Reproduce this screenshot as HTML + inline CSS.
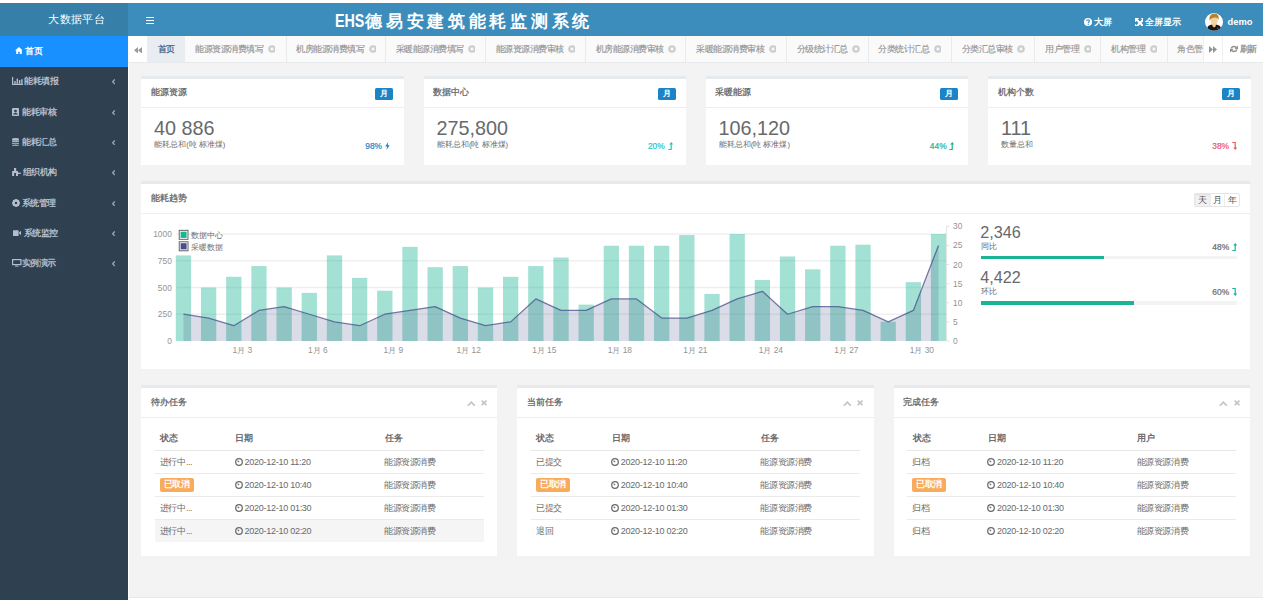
<!DOCTYPE html>
<html><head><meta charset="utf-8"><title>EHS德易安建筑能耗监测系统</title>
<style>
*{box-sizing:border-box;margin:0;padding:0}
html,body{width:1263px;height:600px;overflow:hidden;background:#fff;font-family:"Liberation Sans",sans-serif;color:#676a6c}
.a{position:absolute}
.t{white-space:nowrap;line-height:normal}
#title{left:334.5px;top:9.5px;color:#fff;font-weight:bold;font-size:17px;letter-spacing:3.72px;white-space:nowrap}
#title b{font-size:19.2px;letter-spacing:0;display:inline-block;transform:scaleX(0.745);transform-origin:0 50%;margin-right:-8.9px;vertical-align:-0.5px}
.badge{width:18.3px;height:11.9px;background:#1c84c6;color:#fff;font-size:8px;font-weight:bold;text-align:center;line-height:12px;border-radius:1.5px}
.pct{font-size:8.4px;-webkit-text-stroke:0.2px currentColor;white-space:nowrap;display:flex;align-items:center;justify-content:flex-end}
.ax{font-size:8.4px;fill:#939393;font-family:"Liberation Sans",sans-serif}
.lg{font-size:8.4px;fill:#6e6e6e;font-family:"Liberation Sans",sans-serif}
.btns{height:14.2px;display:flex;border:1px solid #e6e6e6;border-radius:2px;font-size:8.5px;color:#555;background:#fff}
.btns span{width:14.6px;text-align:center;line-height:12px;border-left:1px solid #ececec}
.btns span.on{border-left:0;background:#f2f2f2;box-shadow:inset 0 1px 2px rgba(0,0,0,.08)}
.lbl{width:34px;height:13.2px;background:#f8ac59;color:#fff;font-weight:bold;font-size:8.5px;line-height:13.4px;text-align:center;border-radius:2px;letter-spacing:-0.5px}
</style></head><body>
<div class="a" style="left:0px;top:3px;width:128.00px;height:33.00px;background:#367fa9"></div>
<div class="a" style="left:128px;top:3px;width:1135.00px;height:33.00px;background:#3c8dbc"></div>
<div class="a t" style="left:48.3px;top:11.8px;font-size:11.3px;color:#fff;letter-spacing:0.35px">大数据平台</div>
<div class="a" style="left:145.7px;top:16.9px;width:8.50px;height:1.50px;background:#fff"></div>
<div class="a" style="left:145.7px;top:19.9px;width:8.50px;height:1.50px;background:#fff"></div>
<div class="a" style="left:145.7px;top:22.9px;width:8.50px;height:1.50px;background:#fff"></div>
<div class="a" id="title"><b>EHS</b>德易安建筑能耗监测系统</div>
<svg class="a" style="left:1083.8px;top:18.2px;" width="7.8" height="7.8" viewBox="0 8 8"><circle cx="4" cy="4" r="4" fill="#fff"/><path d="M2.7 3.1C2.7 1.3 5.4 1.3 5.4 3C5.4 4 4.3 4.1 4.3 5" stroke="#3c8dbc" stroke-width="1.2" fill="none"/><rect x="3.7" y="5.7" width="1.2" height="1.1" fill="#3c8dbc"/></svg>
<div class="a t" style="left:1094.2px;top:16.3px;font-size:9px;font-weight:bold;color:#fff">大屏</div>
<svg class="a" style="left:1134.9px;top:18px;" width="8.4" height="7.8" viewBox="0 10 10"><path d="M0 0H4.2L0 4.2Z M10 0V4.2L5.8 0Z M0 10V5.8L4.2 10Z M10 10H5.8L10 5.8Z" fill="#fff"/><path d="M1 1L9 9M9 1L1 9" stroke="#fff" stroke-width="2"/></svg>
<div class="a t" style="left:1145.3px;top:16.3px;font-size:9px;font-weight:bold;color:#fff">全屏显示</div>
<svg class="a" style="left:1204.8px;top:12.8px;" width="18" height="18" viewBox="0 18 18"><circle cx="9" cy="9" r="9" fill="#fff"/><clipPath id="cc"><circle cx="9" cy="9" r="8.8"/></clipPath><g clip-path="url(#cc)"><path d="M1.5 18.5C1.5 13 4.5 11.6 9 11.6C13.5 11.6 16.8 13 16.8 18.5Z" fill="#161616"/><path d="M7.4 11H10.8V13.2L9.1 14.6L7.4 13.2Z" fill="#f1c88a"/><ellipse cx="9.1" cy="7.6" rx="3.5" ry="4.4" fill="#f6d39a"/><path d="M4.6 7.6C3.8 2.6 6.5 0.6 9.3 0.6C12.6 0.6 14.4 2.8 13.5 7.2C13 5.3 11.8 4.4 10.2 4.5C8.4 4.6 6.2 5 4.6 7.6Z" fill="#b3842f"/><circle cx="12.8" cy="15.3" r="0.7" fill="#c8502a"/></g></svg>
<div class="a t" style="left:1227.6px;top:17.2px;font-size:9.3px;font-weight:bold;color:#fff">demo</div>
<div class="a" style="left:0px;top:36px;width:128.00px;height:564.00px;background:#2f4050"></div>
<div class="a" style="left:0px;top:36px;width:128.00px;height:30.50px;background:#1890ff"></div>
<svg class="a" style="left:14.8px;top:47.2px;" width="7.6" height="7" viewBox="0 8 7"><path d="M4 0L0 3.6H1.2V7H3.2V4.8H4.8V7H6.8V3.6H8Z" fill="#fff"/></svg>
<div class="a t" style="left:25px;top:45.6px;font-size:8.5px;font-weight:bold;color:#fff;letter-spacing:-0.5px">首页</div>
<svg class="a" style="left:12.1px;top:77.2px;" width="10.6" height="8" viewBox="0 11 8"><path d="M0.6 0V7.4H11" stroke="#b5bdcb" stroke-width="1.2" fill="none"/><rect x="2.3" y="4" width="1.4" height="2.8" fill="#b5bdcb"/><rect x="4.6" y="1.6" width="1.4" height="5.2" fill="#b5bdcb"/><rect x="6.9" y="3" width="1.4" height="3.8" fill="#b5bdcb"/><rect x="9.2" y="2.2" width="1.4" height="4.6" fill="#b5bdcb"/></svg>
<div class="a t" style="left:24.4px;top:76.3px;font-size:8.5px;font-weight:bold;color:#b5bdcb;letter-spacing:-0.5px">能耗填报</div>
<svg class="a" style="left:111.9px;top:79.3px;" width="3.4" height="5.4" viewBox="0 3.4 5.4"><path d="M2.8 0.4L0.7 2.7L2.8 5" stroke="#9aa6b8" stroke-width="1.3" fill="none"/></svg>
<svg class="a" style="left:12.1px;top:107.8px;" width="7.2" height="8" viewBox="0 7 8"><rect x="0" y="0" width="7" height="8" rx="0.8" fill="#b5bdcb"/><circle cx="3.5" cy="3.1" r="1.4" fill="#2f4050"/><path d="M1.2 6.6C1.2 4.6 5.8 4.6 5.8 6.6Z" fill="#2f4050"/></svg>
<div class="a t" style="left:22.2px;top:106.63px;font-size:8.5px;font-weight:bold;color:#b5bdcb;letter-spacing:-0.5px">能耗审核</div>
<svg class="a" style="left:111.9px;top:109.63px;" width="3.4" height="5.4" viewBox="0 3.4 5.4"><path d="M2.8 0.4L0.7 2.7L2.8 5" stroke="#9aa6b8" stroke-width="1.3" fill="none"/></svg>
<svg class="a" style="left:12.1px;top:138px;" width="7.2" height="8.4" viewBox="0 7 8.4"><ellipse cx="3.5" cy="1.4" rx="3.5" ry="1.4" fill="#b5bdcb"/><path d="M0 2.3V3.5C0 4.6 7 4.6 7 3.5V2.3C7 3.4 0 3.4 0 2.3Z" fill="#b5bdcb"/><path d="M0 4.4V5.6C0 6.7 7 6.7 7 5.6V4.4C7 5.5 0 5.5 0 4.4Z" fill="#b5bdcb"/><path d="M0 6.5V7C0 8.6 7 8.6 7 7V6.5C7 7.6 0 7.6 0 6.5Z" fill="#b5bdcb"/></svg>
<div class="a t" style="left:22.2px;top:136.96px;font-size:8.5px;font-weight:bold;color:#b5bdcb;letter-spacing:-0.5px">能耗汇总</div>
<svg class="a" style="left:111.9px;top:139.96px;" width="3.4" height="5.4" viewBox="0 3.4 5.4"><path d="M2.8 0.4L0.7 2.7L2.8 5" stroke="#9aa6b8" stroke-width="1.3" fill="none"/></svg>
<svg class="a" style="left:12px;top:168px;" width="8.8" height="8" viewBox="0 8.8 8"><rect x="2" y="0" width="2.2" height="3.2" fill="#b5bdcb"/><path d="M0.1 3H6V8H4V5H2.2V8H0.1Z" fill="#b5bdcb"/><rect x="6" y="4.6" width="2.7" height="1.4" fill="#b5bdcb"/></svg>
<div class="a t" style="left:22.75px;top:167.29px;font-size:8.5px;font-weight:bold;color:#b5bdcb;letter-spacing:-0.5px">组织机构</div>
<svg class="a" style="left:111.9px;top:170.29000000000002px;" width="3.4" height="5.4" viewBox="0 3.4 5.4"><path d="M2.8 0.4L0.7 2.7L2.8 5" stroke="#9aa6b8" stroke-width="1.3" fill="none"/></svg>
<svg class="a" style="left:12px;top:199.2px;" width="8" height="7.8" viewBox="0 8 8"><circle cx="4" cy="4" r="2.8" fill="none" stroke="#b5bdcb" stroke-width="1.8"/><path d="M4 0V8M0 4H8M1.2 1.2L6.8 6.8M6.8 1.2L1.2 6.8" stroke="#b5bdcb" stroke-width="1.4"/><circle cx="4" cy="4" r="1.2" fill="#2f4050"/></svg>
<div class="a t" style="left:21.75px;top:197.62px;font-size:8.5px;font-weight:bold;color:#b5bdcb;letter-spacing:-0.5px">系统管理</div>
<svg class="a" style="left:111.9px;top:200.62px;" width="3.4" height="5.4" viewBox="0 3.4 5.4"><path d="M2.8 0.4L0.7 2.7L2.8 5" stroke="#9aa6b8" stroke-width="1.3" fill="none"/></svg>
<svg class="a" style="left:12.5px;top:230.2px;" width="8.5" height="6.2" viewBox="0 8.5 6.2"><rect x="0" y="0.2" width="5.6" height="5.8" rx="0.6" fill="#b5bdcb"/><path d="M5.6 3.1L8.5 0.4V5.8Z" fill="#b5bdcb"/></svg>
<div class="a t" style="left:23.5px;top:227.95px;font-size:8.5px;font-weight:bold;color:#b5bdcb;letter-spacing:-0.5px">系统监控</div>
<svg class="a" style="left:111.9px;top:230.95px;" width="3.4" height="5.4" viewBox="0 3.4 5.4"><path d="M2.8 0.4L0.7 2.7L2.8 5" stroke="#9aa6b8" stroke-width="1.3" fill="none"/></svg>
<svg class="a" style="left:12px;top:259px;" width="9.5" height="7.6" viewBox="0 9.5 7.6"><rect x="0.6" y="0.6" width="8.3" height="5" fill="none" stroke="#b5bdcb" stroke-width="1.2"/><rect x="3" y="6.6" width="3.5" height="1" fill="#b5bdcb"/></svg>
<div class="a t" style="left:21.5px;top:258.28px;font-size:8.5px;font-weight:bold;color:#b5bdcb;letter-spacing:-0.5px">实例演示</div>
<svg class="a" style="left:111.9px;top:261.28000000000003px;" width="3.4" height="5.4" viewBox="0 3.4 5.4"><path d="M2.8 0.4L0.7 2.7L2.8 5" stroke="#9aa6b8" stroke-width="1.3" fill="none"/></svg>
<div class="a" style="left:128px;top:36px;width:1135.00px;height:26.00px;background:#fafafa"></div>
<div class="a" style="left:128px;top:62px;width:1135.00px;height:1.00px;background:#e7eaec"></div>
<div class="a" style="left:128px;top:36px;width:19.00px;height:26.00px;background:#fff"></div>
<svg class="a" style="left:134px;top:46.8px;" width="7.7" height="6.3" viewBox="0 8 6.5"><path d="M4 0V6.5L0 3.25Z M8 0V6.5L4 3.25Z" fill="#9a9a9a"/></svg>
<div class="a" style="left:147px;top:36px;width:38.00px;height:26.00px;background:#e9ecf0"></div>
<div class="a t" style="left:157.6px;top:44.2px;font-size:8.5px;color:#3b5a82;letter-spacing:-0.5px;-webkit-text-stroke:0.2px #3b5a82">首页</div>
<div class="a" style="left:285.5px;top:36px;width:1.00px;height:26.00px;background:#ebebeb"></div>
<div class="a t" style="left:195.3px;top:44px;font-size:8.5px;color:#959595;letter-spacing:-0.5px;-webkit-text-stroke:0.15px #959595">能源资源消费填写</div>
<svg class="a" style="left:267.7px;top:45.4px;" width="7.6" height="7.6" viewBox="0 8 8"><circle cx="4" cy="4" r="3.8" fill="#cccccc"/><path d="M2.6 2.6L5.4 5.4M5.4 2.6L2.6 5.4" stroke="#fafafa" stroke-width="1.2"/></svg>
<div class="a" style="left:384.7px;top:36px;width:1.00px;height:26.00px;background:#ebebeb"></div>
<div class="a t" style="left:296.3px;top:44px;font-size:8.5px;color:#959595;letter-spacing:-0.5px;-webkit-text-stroke:0.15px #959595">机房能源消费填写</div>
<svg class="a" style="left:368.7px;top:45.4px;" width="7.6" height="7.6" viewBox="0 8 8"><circle cx="4" cy="4" r="3.8" fill="#cccccc"/><path d="M2.6 2.6L5.4 5.4M5.4 2.6L2.6 5.4" stroke="#fafafa" stroke-width="1.2"/></svg>
<div class="a" style="left:484.7px;top:36px;width:1.00px;height:26.00px;background:#ebebeb"></div>
<div class="a t" style="left:395.5px;top:44px;font-size:8.5px;color:#959595;letter-spacing:-0.5px;-webkit-text-stroke:0.15px #959595">采暖能源消费填写</div>
<svg class="a" style="left:467.9px;top:45.4px;" width="7.6" height="7.6" viewBox="0 8 8"><circle cx="4" cy="4" r="3.8" fill="#cccccc"/><path d="M2.6 2.6L5.4 5.4M5.4 2.6L2.6 5.4" stroke="#fafafa" stroke-width="1.2"/></svg>
<div class="a" style="left:584.8px;top:36px;width:1.00px;height:26.00px;background:#ebebeb"></div>
<div class="a t" style="left:495.5px;top:44px;font-size:8.5px;color:#959595;letter-spacing:-0.5px;-webkit-text-stroke:0.15px #959595">能源资源消费审核</div>
<svg class="a" style="left:567.9px;top:45.4px;" width="7.6" height="7.6" viewBox="0 8 8"><circle cx="4" cy="4" r="3.8" fill="#cccccc"/><path d="M2.6 2.6L5.4 5.4M5.4 2.6L2.6 5.4" stroke="#fafafa" stroke-width="1.2"/></svg>
<div class="a" style="left:685.4px;top:36px;width:1.00px;height:26.00px;background:#ebebeb"></div>
<div class="a t" style="left:595.5999999999999px;top:44px;font-size:8.5px;color:#959595;letter-spacing:-0.5px;-webkit-text-stroke:0.15px #959595">机房能源消费审核</div>
<svg class="a" style="left:667.9999999999999px;top:45.4px;" width="7.6" height="7.6" viewBox="0 8 8"><circle cx="4" cy="4" r="3.8" fill="#cccccc"/><path d="M2.6 2.6L5.4 5.4M5.4 2.6L2.6 5.4" stroke="#fafafa" stroke-width="1.2"/></svg>
<div class="a" style="left:786.0px;top:36px;width:1.00px;height:26.00px;background:#ebebeb"></div>
<div class="a t" style="left:696.1999999999999px;top:44px;font-size:8.5px;color:#959595;letter-spacing:-0.5px;-webkit-text-stroke:0.15px #959595">采暖能源消费审核</div>
<svg class="a" style="left:768.5999999999999px;top:45.4px;" width="7.6" height="7.6" viewBox="0 8 8"><circle cx="4" cy="4" r="3.8" fill="#cccccc"/><path d="M2.6 2.6L5.4 5.4M5.4 2.6L2.6 5.4" stroke="#fafafa" stroke-width="1.2"/></svg>
<div class="a" style="left:867.5px;top:36px;width:1.00px;height:26.00px;background:#ebebeb"></div>
<div class="a t" style="left:796.8px;top:44px;font-size:8.5px;color:#959595;letter-spacing:-0.5px;-webkit-text-stroke:0.15px #959595">分级统计汇总</div>
<svg class="a" style="left:852.1999999999999px;top:45.4px;" width="7.6" height="7.6" viewBox="0 8 8"><circle cx="4" cy="4" r="3.8" fill="#cccccc"/><path d="M2.6 2.6L5.4 5.4M5.4 2.6L2.6 5.4" stroke="#fafafa" stroke-width="1.2"/></svg>
<div class="a" style="left:951.1px;top:36px;width:1.00px;height:26.00px;background:#ebebeb"></div>
<div class="a t" style="left:878.3px;top:44px;font-size:8.5px;color:#959595;letter-spacing:-0.5px;-webkit-text-stroke:0.15px #959595">分类统计汇总</div>
<svg class="a" style="left:933.6999999999999px;top:45.4px;" width="7.6" height="7.6" viewBox="0 8 8"><circle cx="4" cy="4" r="3.8" fill="#cccccc"/><path d="M2.6 2.6L5.4 5.4M5.4 2.6L2.6 5.4" stroke="#fafafa" stroke-width="1.2"/></svg>
<div class="a" style="left:1034.4px;top:36px;width:1.00px;height:26.00px;background:#ebebeb"></div>
<div class="a t" style="left:961.9px;top:44px;font-size:8.5px;color:#959595;letter-spacing:-0.5px;-webkit-text-stroke:0.15px #959595">分类汇总审核</div>
<svg class="a" style="left:1017.3px;top:45.4px;" width="7.6" height="7.6" viewBox="0 8 8"><circle cx="4" cy="4" r="3.8" fill="#cccccc"/><path d="M2.6 2.6L5.4 5.4M5.4 2.6L2.6 5.4" stroke="#fafafa" stroke-width="1.2"/></svg>
<div class="a" style="left:1100.4px;top:36px;width:1.00px;height:26.00px;background:#ebebeb"></div>
<div class="a t" style="left:1045.2px;top:44px;font-size:8.5px;color:#959595;letter-spacing:-0.5px;-webkit-text-stroke:0.15px #959595">用户管理</div>
<svg class="a" style="left:1083.6000000000001px;top:45.4px;" width="7.6" height="7.6" viewBox="0 8 8"><circle cx="4" cy="4" r="3.8" fill="#cccccc"/><path d="M2.6 2.6L5.4 5.4M5.4 2.6L2.6 5.4" stroke="#fafafa" stroke-width="1.2"/></svg>
<div class="a" style="left:1166.5px;top:36px;width:1.00px;height:26.00px;background:#ebebeb"></div>
<div class="a t" style="left:1111.2px;top:44px;font-size:8.5px;color:#959595;letter-spacing:-0.5px;-webkit-text-stroke:0.15px #959595">机构管理</div>
<svg class="a" style="left:1149.6000000000001px;top:45.4px;" width="7.6" height="7.6" viewBox="0 8 8"><circle cx="4" cy="4" r="3.8" fill="#cccccc"/><path d="M2.6 2.6L5.4 5.4M5.4 2.6L2.6 5.4" stroke="#fafafa" stroke-width="1.2"/></svg>
<div class="a t" style="left:1177.3px;top:44px;font-size:8.5px;color:#959595;letter-spacing:-0.5px;-webkit-text-stroke:0.15px #959595">角色管理</div>
<div class="a" style="left:1203.3px;top:36px;width:19.90px;height:26.00px;background:#fff;border-left:1px solid #f0f0f0;border-right:1px solid #f0f0f0"></div>
<svg class="a" style="left:1209.3px;top:45.6px;" width="7.9" height="7.2" viewBox="0 8 7"><path d="M0 0V7L4 3.5Z M4 0V7L8 3.5Z" fill="#959595"/></svg>
<div class="a" style="left:1223.2px;top:36px;width:39.80px;height:26.00px;background:#fff"></div>
<svg class="a" style="left:1229.9px;top:45.4px;" width="7.8" height="7.8" viewBox="0 8 8"><path d="M6.6 3.1A2.9 2.9 0 0 0 1.3 3.2" stroke="#8f8f8f" stroke-width="1.5" fill="none"/><path d="M8 0.6V4.2H4.4Z" fill="#8f8f8f"/><path d="M1.4 4.9A2.9 2.9 0 0 0 6.7 4.8" stroke="#8f8f8f" stroke-width="1.5" fill="none"/><path d="M0 7.4V3.8H3.6Z" fill="#8f8f8f"/></svg>
<div class="a t" style="left:1239.8px;top:44.2px;font-size:8.5px;color:#939393;letter-spacing:-0.3px;-webkit-text-stroke:0.3px #939393">刷新</div>
<div class="a" style="left:128px;top:63px;width:1135.00px;height:534.00px;background:#f3f3f4"></div>
<div class="a" style="left:127.8px;top:63px;width:1.50px;height:537.00px;background:#fff"></div>
<div class="a" style="left:129.3px;top:597px;width:1133.70px;height:1.00px;background:#e7eaec"></div>
<div class="a" style="left:129.3px;top:598px;width:1133.70px;height:2.00px;background:#fff"></div>
<div class="a" style="left:141px;top:76px;width:262.50px;height:3.00px;background:#e7eaec"></div>
<div class="a" style="left:141px;top:79px;width:262.50px;height:86.00px;background:#fff"></div>
<div class="a" style="left:141px;top:107px;width:262.50px;height:1.30px;background:#eceef1"></div>
<div class="a t" style="left:150.6px;top:86.4px;font-size:9px;color:#5f6265;-webkit-text-stroke:0.25px #5f6265">能源资源</div>
<div class="a badge" style="left:374.9px;top:87.8px">月</div>
<div class="a t" style="left:153.9px;top:117.2px;font-size:19.8px;color:#676a6c">40 886</div>
<div class="a t" style="left:154.2px;top:140.4px;font-size:7.6px;color:#676a6c">能耗总和(吨 标准煤)</div>
<div class="a pct" style="left:364.5px;width:25.5px;top:140.6px;color:#1c84c6">98%<svg width="5.2" height="8" viewBox="0 0 5.2 8" style="margin-left:2.8px"><path d="M3.2 0L0.3 4.6H2.2L1.4 8L4.7 3.2H2.8Z" fill="#1c84c6"/></svg></div>
<div class="a" style="left:423.7px;top:76px;width:262.50px;height:3.00px;background:#e7eaec"></div>
<div class="a" style="left:423.7px;top:79px;width:262.50px;height:86.00px;background:#fff"></div>
<div class="a" style="left:423.7px;top:107px;width:262.50px;height:1.30px;background:#eceef1"></div>
<div class="a t" style="left:433.3px;top:86.4px;font-size:9px;color:#5f6265;-webkit-text-stroke:0.25px #5f6265">数据中心</div>
<div class="a badge" style="left:657.6px;top:87.8px">月</div>
<div class="a t" style="left:436.59999999999997px;top:117.2px;font-size:19.8px;color:#676a6c">275,800</div>
<div class="a t" style="left:436.9px;top:140.4px;font-size:7.6px;color:#676a6c">能耗总和(吨 标准煤)</div>
<div class="a pct" style="left:647.2px;width:25.5px;top:140.6px;color:#23c6c8">20%<svg width="5.2" height="8" viewBox="0 0 5.2 8" style="margin-left:2.8px"><path d="M3.3 0L1.2 2.6H2.6V6.9H0.3V8H3.8V2.6H5.2Z" fill="#23c6c8"/></svg></div>
<div class="a" style="left:705.6px;top:76px;width:262.50px;height:3.00px;background:#e7eaec"></div>
<div class="a" style="left:705.6px;top:79px;width:262.50px;height:86.00px;background:#fff"></div>
<div class="a" style="left:705.6px;top:107px;width:262.50px;height:1.30px;background:#eceef1"></div>
<div class="a t" style="left:715.2px;top:86.4px;font-size:9px;color:#5f6265;-webkit-text-stroke:0.25px #5f6265">采暖能源</div>
<div class="a badge" style="left:939.5px;top:87.8px">月</div>
<div class="a t" style="left:718.5px;top:117.2px;font-size:19.8px;color:#676a6c">106,120</div>
<div class="a t" style="left:718.8000000000001px;top:140.4px;font-size:7.6px;color:#676a6c">能耗总和(吨 标准煤)</div>
<div class="a pct" style="left:929.1px;width:25.5px;top:140.6px;color:#1ab394">44%<svg width="5.2" height="8" viewBox="0 0 5.2 8" style="margin-left:2.8px"><path d="M3.3 0L1.2 2.6H2.6V6.9H0.3V8H3.8V2.6H5.2Z" fill="#1ab394"/></svg></div>
<div class="a" style="left:988.0px;top:76px;width:262.50px;height:3.00px;background:#e7eaec"></div>
<div class="a" style="left:988.0px;top:79px;width:262.50px;height:86.00px;background:#fff"></div>
<div class="a" style="left:988.0px;top:107px;width:262.50px;height:1.30px;background:#eceef1"></div>
<div class="a t" style="left:997.6px;top:86.4px;font-size:9px;color:#5f6265;-webkit-text-stroke:0.25px #5f6265">机构个数</div>
<div class="a badge" style="left:1221.9px;top:87.8px">月</div>
<div class="a t" style="left:1000.9px;top:117.2px;font-size:19.8px;color:#676a6c">111</div>
<div class="a t" style="left:1001.2px;top:140.4px;font-size:7.6px;color:#676a6c">数量总和</div>
<div class="a pct" style="left:1211.5px;width:25.5px;top:140.6px;color:#ed5565">38%<svg width="5.2" height="8" viewBox="0 0 5.2 8" style="margin-left:2.8px"><path d="M3.3 8L1.2 5.4H2.6V1.1H0.3V0H3.8V5.4H5.2Z" fill="#ed5565"/></svg></div>
<div class="a" style="left:141px;top:181px;width:1109.00px;height:3.00px;background:#e7eaec"></div>
<div class="a" style="left:141px;top:184px;width:1109.00px;height:185.20px;background:#fff"></div>
<div class="a" style="left:141px;top:213px;width:1109.00px;height:1.30px;background:#eceef1"></div>
<div class="a t" style="left:151px;top:192.2px;font-size:9px;color:#5f6265;-webkit-text-stroke:0.25px #5f6265">能耗趋势</div>
<div class="a btns" style="left:1194.3px;top:193.3px"><span class="on">天</span><span>月</span><span>年</span></div>
<svg class="a" style="left:0;top:0" width="1263" height="600" viewBox="0 0 1263 600"><line x1="175.8" x2="946.4" y1="314.25" y2="314.25" stroke="#efefef" stroke-width="1.3"/><line x1="175.8" x2="946.4" y1="287.50" y2="287.50" stroke="#efefef" stroke-width="1.3"/><line x1="175.8" x2="946.4" y1="260.75" y2="260.75" stroke="#efefef" stroke-width="1.3"/><line x1="175.8" x2="946.4" y1="234.00" y2="234.00" stroke="#efefef" stroke-width="1.3"/><rect x="175.80" y="255.40" width="15.3" height="85.60" fill="#1ab394" fill-opacity="0.4"/><rect x="200.97" y="287.50" width="15.3" height="53.50" fill="#1ab394" fill-opacity="0.4"/><rect x="226.14" y="276.80" width="15.3" height="64.20" fill="#1ab394" fill-opacity="0.4"/><rect x="251.31" y="266.10" width="15.3" height="74.90" fill="#1ab394" fill-opacity="0.4"/><rect x="276.48" y="287.50" width="15.3" height="53.50" fill="#1ab394" fill-opacity="0.4"/><rect x="301.65" y="292.85" width="15.3" height="48.15" fill="#1ab394" fill-opacity="0.4"/><rect x="326.82" y="255.40" width="15.3" height="85.60" fill="#1ab394" fill-opacity="0.4"/><rect x="351.99" y="277.87" width="15.3" height="63.13" fill="#1ab394" fill-opacity="0.4"/><rect x="377.16" y="290.71" width="15.3" height="50.29" fill="#1ab394" fill-opacity="0.4"/><rect x="402.33" y="246.84" width="15.3" height="94.16" fill="#1ab394" fill-opacity="0.4"/><rect x="427.50" y="267.17" width="15.3" height="73.83" fill="#1ab394" fill-opacity="0.4"/><rect x="452.67" y="266.10" width="15.3" height="74.90" fill="#1ab394" fill-opacity="0.4"/><rect x="477.84" y="287.50" width="15.3" height="53.50" fill="#1ab394" fill-opacity="0.4"/><rect x="503.01" y="276.80" width="15.3" height="64.20" fill="#1ab394" fill-opacity="0.4"/><rect x="528.18" y="266.10" width="15.3" height="74.90" fill="#1ab394" fill-opacity="0.4"/><rect x="553.35" y="257.54" width="15.3" height="83.46" fill="#1ab394" fill-opacity="0.4"/><rect x="578.52" y="304.62" width="15.3" height="36.38" fill="#1ab394" fill-opacity="0.4"/><rect x="603.69" y="245.77" width="15.3" height="95.23" fill="#1ab394" fill-opacity="0.4"/><rect x="628.86" y="245.77" width="15.3" height="95.23" fill="#1ab394" fill-opacity="0.4"/><rect x="654.03" y="245.77" width="15.3" height="95.23" fill="#1ab394" fill-opacity="0.4"/><rect x="679.20" y="235.07" width="15.3" height="105.93" fill="#1ab394" fill-opacity="0.4"/><rect x="704.37" y="293.92" width="15.3" height="47.08" fill="#1ab394" fill-opacity="0.4"/><rect x="729.54" y="234.00" width="15.3" height="107.00" fill="#1ab394" fill-opacity="0.4"/><rect x="754.71" y="280.01" width="15.3" height="60.99" fill="#1ab394" fill-opacity="0.4"/><rect x="779.88" y="256.47" width="15.3" height="84.53" fill="#1ab394" fill-opacity="0.4"/><rect x="805.05" y="269.31" width="15.3" height="71.69" fill="#1ab394" fill-opacity="0.4"/><rect x="830.22" y="245.77" width="15.3" height="95.23" fill="#1ab394" fill-opacity="0.4"/><rect x="855.39" y="244.70" width="15.3" height="96.30" fill="#1ab394" fill-opacity="0.4"/><rect x="880.56" y="321.74" width="15.3" height="19.26" fill="#1ab394" fill-opacity="0.4"/><rect x="905.73" y="282.15" width="15.3" height="58.85" fill="#1ab394" fill-opacity="0.4"/><rect x="930.90" y="234.00" width="15.3" height="107.00" fill="#1ab394" fill-opacity="0.4"/><path d="M183.45,341.00 L183.45,314.24 L208.62,318.06 L233.79,325.71 L258.96,310.41 L284.13,306.59 L309.30,314.24 L334.47,321.88 L359.64,325.71 L384.81,314.24 L409.98,310.41 L435.15,306.59 L460.32,318.06 L485.49,325.71 L510.66,321.88 L535.83,298.94 L561.00,310.41 L586.17,310.41 L611.34,298.94 L636.51,298.94 L661.68,318.06 L686.85,318.06 L712.02,310.41 L737.19,298.94 L762.36,291.30 L787.53,314.24 L812.70,306.59 L837.87,306.59 L863.04,310.41 L888.21,321.88 L913.38,310.41 L938.55,245.42 L938.55,341.00 Z" fill="#464f88" fill-opacity="0.2"/><path d="M183.45,314.24 L208.62,318.06 L233.79,325.71 L258.96,310.41 L284.13,306.59 L309.30,314.24 L334.47,321.88 L359.64,325.71 L384.81,314.24 L409.98,310.41 L435.15,306.59 L460.32,318.06 L485.49,325.71 L510.66,321.88 L535.83,298.94 L561.00,310.41 L586.17,310.41 L611.34,298.94 L636.51,298.94 L661.68,318.06 L686.85,318.06 L712.02,310.41 L737.19,298.94 L762.36,291.30 L787.53,314.24 L812.70,306.59 L837.87,306.59 L863.04,310.41 L888.21,321.88 L913.38,310.41 L938.55,245.42" fill="none" stroke="#464f88" stroke-opacity="0.75" stroke-width="1.25" stroke-linejoin="round"/><line x1="946.6" x2="946.6" y1="226" y2="341" stroke="#e3e3e3" stroke-width="1"/><line x1="946.6" x2="949.6" y1="341.00" y2="341.00" stroke="#e3e3e3" stroke-width="1"/><text x="953" y="344.00" class="ax">0</text><line x1="946.6" x2="949.6" y1="321.88" y2="321.88" stroke="#e3e3e3" stroke-width="1"/><text x="953" y="324.88" class="ax">5</text><line x1="946.6" x2="949.6" y1="302.77" y2="302.77" stroke="#e3e3e3" stroke-width="1"/><text x="953" y="305.77" class="ax">10</text><line x1="946.6" x2="949.6" y1="283.65" y2="283.65" stroke="#e3e3e3" stroke-width="1"/><text x="953" y="286.65" class="ax">15</text><line x1="946.6" x2="949.6" y1="264.53" y2="264.53" stroke="#e3e3e3" stroke-width="1"/><text x="953" y="267.53" class="ax">20</text><line x1="946.6" x2="949.6" y1="245.42" y2="245.42" stroke="#e3e3e3" stroke-width="1"/><text x="953" y="248.42" class="ax">25</text><line x1="946.6" x2="949.6" y1="226.30" y2="226.30" stroke="#e3e3e3" stroke-width="1"/><text x="953" y="229.30" class="ax">30</text><text x="171.8" y="344.00" class="ax" text-anchor="end">0</text><text x="171.8" y="317.25" class="ax" text-anchor="end">250</text><text x="171.8" y="290.50" class="ax" text-anchor="end">500</text><text x="171.8" y="263.75" class="ax" text-anchor="end">750</text><text x="171.8" y="237.00" class="ax" text-anchor="end">1000</text><text x="242.25" y="352.6" class="ax" text-anchor="middle">1月 3</text><text x="317.76" y="352.6" class="ax" text-anchor="middle">1月 6</text><text x="393.27" y="352.6" class="ax" text-anchor="middle">1月 9</text><text x="468.78" y="352.6" class="ax" text-anchor="middle">1月 12</text><text x="544.29" y="352.6" class="ax" text-anchor="middle">1月 15</text><text x="619.80" y="352.6" class="ax" text-anchor="middle">1月 18</text><text x="695.31" y="352.6" class="ax" text-anchor="middle">1月 21</text><text x="770.82" y="352.6" class="ax" text-anchor="middle">1月 24</text><text x="846.33" y="352.6" class="ax" text-anchor="middle">1月 27</text><text x="921.84" y="352.6" class="ax" text-anchor="middle">1月 30</text><rect x="179.2" y="230.3" width="8.8" height="9" fill="#fff" stroke="#555" stroke-width="0.9"/><rect x="180.6" y="231.7" width="6" height="6.2" fill="#1ab394"/><rect x="179.2" y="241.8" width="8.8" height="9" fill="#fff" stroke="#555" stroke-width="0.9"/><rect x="180.6" y="243.2" width="6" height="6.2" fill="#464f88"/><text x="191.3" y="238.3" class="lg">数据中心</text><text x="191.3" y="249.8" class="lg">采暖数据</text></svg>
<div class="a t" style="left:980.2px;top:222.9px;font-size:16.2px;color:#676a6c">2,346</div>
<div class="a t" style="left:980.6px;top:242.3px;font-size:7.6px;color:#676a6c">同比</div>
<div class="a pct" style="left:1200px;width:36.8px;top:241.8px;color:#676a6c;font-weight:normal">48%<svg width="5.2" height="8" viewBox="0 0 5.2 8" style="margin-left:2.5px"><path d="M3.3 0L1.2 2.6H2.6V6.9H0.3V8H3.8V2.6H5.2Z" fill="#1ab394"/></svg></div>
<div class="a" style="left:981px;top:255.6px;width:255.70px;height:3.90px;background:#f3f3f3"></div>
<div class="a" style="left:981px;top:255.6px;width:122.70px;height:3.90px;background:#1ab394"></div>
<div class="a t" style="left:980.2px;top:267.9px;font-size:16.2px;color:#676a6c">4,422</div>
<div class="a t" style="left:980.6px;top:287.3px;font-size:7.6px;color:#676a6c">环比</div>
<div class="a pct" style="left:1200px;width:36.8px;top:286.8px;color:#676a6c;font-weight:normal">60%<svg width="5.2" height="8" viewBox="0 0 5.2 8" style="margin-left:2.5px"><path d="M3.3 8L1.2 5.4H2.6V1.1H0.3V0H3.8V5.4H5.2Z" fill="#1ab394"/></svg></div>
<div class="a" style="left:981px;top:300.9px;width:255.70px;height:3.90px;background:#f3f3f3"></div>
<div class="a" style="left:981px;top:300.9px;width:153.40px;height:3.90px;background:#1ab394"></div>
<div class="a" style="left:141px;top:385px;width:356.40px;height:3.00px;background:#e7eaec"></div>
<div class="a" style="left:141px;top:388px;width:356.40px;height:167.60px;background:#fff"></div>
<div class="a" style="left:141px;top:417px;width:356.40px;height:1.30px;background:#eceef1"></div>
<div class="a t" style="left:150.8px;top:395.9px;font-size:9px;color:#5f6265;-webkit-text-stroke:0.25px #5f6265">待办任务</div>
<svg class="a" style="left:466.6px;top:400.6px;" width="8.6" height="5.6" viewBox="0 8.6 5.6"><path d="M0.8 4.9L4.3 1.2L7.8 4.9" stroke="#c5c5c5" stroke-width="1.7" fill="none"/></svg>
<svg class="a" style="left:481px;top:400.2px;" width="6.2" height="5.8" viewBox="0 6.2 5.8"><path d="M0.7 0.6L5.5 5.2M5.5 0.6L0.7 5.2" stroke="#c5c5c5" stroke-width="1.7"/></svg>
<div class="a t" style="left:160.0px;top:432.9px;font-size:8.6px;color:#5f6265;-webkit-text-stroke:0.3px #5f6265">状态</div>
<div class="a t" style="left:235.4px;top:432.9px;font-size:8.6px;color:#5f6265;-webkit-text-stroke:0.3px #5f6265">日期</div>
<div class="a t" style="left:384.6px;top:432.9px;font-size:8.6px;color:#5f6265;-webkit-text-stroke:0.3px #5f6265">任务</div>
<div class="a" style="left:154.5px;top:450px;width:329.00px;height:1.20px;background:#e7e7e7"></div>
<div class="a" style="left:154.5px;top:519.5px;width:329.00px;height:22.80px;background:#f5f5f5"></div>
<div class="a" style="left:154.5px;top:473px;width:329.00px;height:1.00px;background:#ebebeb"></div>
<div class="a" style="left:154.5px;top:496px;width:329.00px;height:1.00px;background:#ebebeb"></div>
<div class="a" style="left:154.5px;top:519px;width:329.00px;height:1.00px;background:#ebebeb"></div>
<div class="a t" style="left:159.8px;top:456.6px;font-size:8.5px;color:#676a6c;letter-spacing:-0.3px">进行中...</div>
<svg class="a" style="left:234.6px;top:458.20000000000005px;overflow:visible" width="6.9" height="6.9" viewBox="0 8 8"><circle cx="4" cy="4" r="3.3" fill="none" stroke="#676a6c" stroke-width="1.25"/><path d="M4.1 4.1L2.6 2.6" fill="none" stroke="#676a6c" stroke-width="1.1"/></svg>
<div class="a t" style="left:244.6px;top:456.70000000000005px;font-size:9px;color:#676a6c;letter-spacing:-0.27px">2020-12-10 11:20</div>
<div class="a t" style="left:384.1px;top:456.6px;font-size:8.5px;color:#676a6c;letter-spacing:-0.4px">能源资源消费</div>
<div class="a lbl" style="left:159.7px;top:478.4px">已取消</div>
<svg class="a" style="left:234.6px;top:481.20000000000005px;overflow:visible" width="6.9" height="6.9" viewBox="0 8 8"><circle cx="4" cy="4" r="3.3" fill="none" stroke="#676a6c" stroke-width="1.25"/><path d="M4.1 4.1L2.6 2.6" fill="none" stroke="#676a6c" stroke-width="1.1"/></svg>
<div class="a t" style="left:244.6px;top:479.70000000000005px;font-size:9px;color:#676a6c;letter-spacing:-0.27px">2020-12-10 10:40</div>
<div class="a t" style="left:384.1px;top:479.6px;font-size:8.5px;color:#676a6c;letter-spacing:-0.4px">能源资源消费</div>
<div class="a t" style="left:159.8px;top:502.6px;font-size:8.5px;color:#676a6c;letter-spacing:-0.3px">进行中...</div>
<svg class="a" style="left:234.6px;top:504.20000000000005px;overflow:visible" width="6.9" height="6.9" viewBox="0 8 8"><circle cx="4" cy="4" r="3.3" fill="none" stroke="#676a6c" stroke-width="1.25"/><path d="M4.1 4.1L2.6 2.6" fill="none" stroke="#676a6c" stroke-width="1.1"/></svg>
<div class="a t" style="left:244.6px;top:502.70000000000005px;font-size:9px;color:#676a6c;letter-spacing:-0.27px">2020-12-10 01:30</div>
<div class="a t" style="left:384.1px;top:502.6px;font-size:8.5px;color:#676a6c;letter-spacing:-0.4px">能源资源消费</div>
<div class="a t" style="left:159.8px;top:525.6px;font-size:8.5px;color:#676a6c;letter-spacing:-0.3px">进行中...</div>
<svg class="a" style="left:234.6px;top:527.2px;overflow:visible" width="6.9" height="6.9" viewBox="0 8 8"><circle cx="4" cy="4" r="3.3" fill="none" stroke="#676a6c" stroke-width="1.25"/><path d="M4.1 4.1L2.6 2.6" fill="none" stroke="#676a6c" stroke-width="1.1"/></svg>
<div class="a t" style="left:244.6px;top:525.7px;font-size:9px;color:#676a6c;letter-spacing:-0.27px">2020-12-10 02:20</div>
<div class="a t" style="left:384.1px;top:525.6px;font-size:8.5px;color:#676a6c;letter-spacing:-0.4px">能源资源消费</div>
<div class="a" style="left:517.25px;top:385px;width:356.40px;height:3.00px;background:#e7eaec"></div>
<div class="a" style="left:517.25px;top:388px;width:356.40px;height:167.60px;background:#fff"></div>
<div class="a" style="left:517.25px;top:417px;width:356.40px;height:1.30px;background:#eceef1"></div>
<div class="a t" style="left:527.05px;top:395.9px;font-size:9px;color:#5f6265;-webkit-text-stroke:0.25px #5f6265">当前任务</div>
<svg class="a" style="left:842.85px;top:400.6px;" width="8.6" height="5.6" viewBox="0 8.6 5.6"><path d="M0.8 4.9L4.3 1.2L7.8 4.9" stroke="#c5c5c5" stroke-width="1.7" fill="none"/></svg>
<svg class="a" style="left:857.25px;top:400.2px;" width="6.2" height="5.8" viewBox="0 6.2 5.8"><path d="M0.7 0.6L5.5 5.2M5.5 0.6L0.7 5.2" stroke="#c5c5c5" stroke-width="1.7"/></svg>
<div class="a t" style="left:536.25px;top:432.9px;font-size:8.6px;color:#5f6265;-webkit-text-stroke:0.3px #5f6265">状态</div>
<div class="a t" style="left:611.65px;top:432.9px;font-size:8.6px;color:#5f6265;-webkit-text-stroke:0.3px #5f6265">日期</div>
<div class="a t" style="left:760.85px;top:432.9px;font-size:8.6px;color:#5f6265;-webkit-text-stroke:0.3px #5f6265">任务</div>
<div class="a" style="left:530.75px;top:450px;width:329.00px;height:1.20px;background:#e7e7e7"></div>
<div class="a" style="left:530.75px;top:473px;width:329.00px;height:1.00px;background:#ebebeb"></div>
<div class="a" style="left:530.75px;top:496px;width:329.00px;height:1.00px;background:#ebebeb"></div>
<div class="a" style="left:530.75px;top:519px;width:329.00px;height:1.00px;background:#ebebeb"></div>
<div class="a t" style="left:536.05px;top:456.6px;font-size:8.5px;color:#676a6c;letter-spacing:-0.3px">已提交</div>
<svg class="a" style="left:610.85px;top:458.20000000000005px;overflow:visible" width="6.9" height="6.9" viewBox="0 8 8"><circle cx="4" cy="4" r="3.3" fill="none" stroke="#676a6c" stroke-width="1.25"/><path d="M4.1 4.1L2.6 2.6" fill="none" stroke="#676a6c" stroke-width="1.1"/></svg>
<div class="a t" style="left:620.85px;top:456.70000000000005px;font-size:9px;color:#676a6c;letter-spacing:-0.27px">2020-12-10 11:20</div>
<div class="a t" style="left:760.35px;top:456.6px;font-size:8.5px;color:#676a6c;letter-spacing:-0.4px">能源资源消费</div>
<div class="a lbl" style="left:535.95px;top:478.4px">已取消</div>
<svg class="a" style="left:610.85px;top:481.20000000000005px;overflow:visible" width="6.9" height="6.9" viewBox="0 8 8"><circle cx="4" cy="4" r="3.3" fill="none" stroke="#676a6c" stroke-width="1.25"/><path d="M4.1 4.1L2.6 2.6" fill="none" stroke="#676a6c" stroke-width="1.1"/></svg>
<div class="a t" style="left:620.85px;top:479.70000000000005px;font-size:9px;color:#676a6c;letter-spacing:-0.27px">2020-12-10 10:40</div>
<div class="a t" style="left:760.35px;top:479.6px;font-size:8.5px;color:#676a6c;letter-spacing:-0.4px">能源资源消费</div>
<div class="a t" style="left:536.05px;top:502.6px;font-size:8.5px;color:#676a6c;letter-spacing:-0.3px">已提交</div>
<svg class="a" style="left:610.85px;top:504.20000000000005px;overflow:visible" width="6.9" height="6.9" viewBox="0 8 8"><circle cx="4" cy="4" r="3.3" fill="none" stroke="#676a6c" stroke-width="1.25"/><path d="M4.1 4.1L2.6 2.6" fill="none" stroke="#676a6c" stroke-width="1.1"/></svg>
<div class="a t" style="left:620.85px;top:502.70000000000005px;font-size:9px;color:#676a6c;letter-spacing:-0.27px">2020-12-10 01:30</div>
<div class="a t" style="left:760.35px;top:502.6px;font-size:8.5px;color:#676a6c;letter-spacing:-0.4px">能源资源消费</div>
<div class="a t" style="left:536.05px;top:525.6px;font-size:8.5px;color:#676a6c;letter-spacing:-0.3px">退回</div>
<svg class="a" style="left:610.85px;top:527.2px;overflow:visible" width="6.9" height="6.9" viewBox="0 8 8"><circle cx="4" cy="4" r="3.3" fill="none" stroke="#676a6c" stroke-width="1.25"/><path d="M4.1 4.1L2.6 2.6" fill="none" stroke="#676a6c" stroke-width="1.1"/></svg>
<div class="a t" style="left:620.85px;top:525.7px;font-size:9px;color:#676a6c;letter-spacing:-0.27px">2020-12-10 02:20</div>
<div class="a t" style="left:760.35px;top:525.6px;font-size:8.5px;color:#676a6c;letter-spacing:-0.4px">能源资源消费</div>
<div class="a" style="left:893.5px;top:385px;width:356.40px;height:3.00px;background:#e7eaec"></div>
<div class="a" style="left:893.5px;top:388px;width:356.40px;height:167.60px;background:#fff"></div>
<div class="a" style="left:893.5px;top:417px;width:356.40px;height:1.30px;background:#eceef1"></div>
<div class="a t" style="left:903.3px;top:395.9px;font-size:9px;color:#5f6265;-webkit-text-stroke:0.25px #5f6265">完成任务</div>
<svg class="a" style="left:1219.1px;top:400.6px;" width="8.6" height="5.6" viewBox="0 8.6 5.6"><path d="M0.8 4.9L4.3 1.2L7.8 4.9" stroke="#c5c5c5" stroke-width="1.7" fill="none"/></svg>
<svg class="a" style="left:1233.5px;top:400.2px;" width="6.2" height="5.8" viewBox="0 6.2 5.8"><path d="M0.7 0.6L5.5 5.2M5.5 0.6L0.7 5.2" stroke="#c5c5c5" stroke-width="1.7"/></svg>
<div class="a t" style="left:912.5px;top:432.9px;font-size:8.6px;color:#5f6265;-webkit-text-stroke:0.3px #5f6265">状态</div>
<div class="a t" style="left:987.9px;top:432.9px;font-size:8.6px;color:#5f6265;-webkit-text-stroke:0.3px #5f6265">日期</div>
<div class="a t" style="left:1137.1px;top:432.9px;font-size:8.6px;color:#5f6265;-webkit-text-stroke:0.3px #5f6265">用户</div>
<div class="a" style="left:907.0px;top:450px;width:329.00px;height:1.20px;background:#e7e7e7"></div>
<div class="a" style="left:907.0px;top:473px;width:329.00px;height:1.00px;background:#ebebeb"></div>
<div class="a" style="left:907.0px;top:496px;width:329.00px;height:1.00px;background:#ebebeb"></div>
<div class="a" style="left:907.0px;top:519px;width:329.00px;height:1.00px;background:#ebebeb"></div>
<div class="a t" style="left:912.3px;top:456.6px;font-size:8.5px;color:#676a6c;letter-spacing:-0.3px">归档</div>
<svg class="a" style="left:987.1px;top:458.20000000000005px;overflow:visible" width="6.9" height="6.9" viewBox="0 8 8"><circle cx="4" cy="4" r="3.3" fill="none" stroke="#676a6c" stroke-width="1.25"/><path d="M4.1 4.1L2.6 2.6" fill="none" stroke="#676a6c" stroke-width="1.1"/></svg>
<div class="a t" style="left:997.1px;top:456.70000000000005px;font-size:9px;color:#676a6c;letter-spacing:-0.27px">2020-12-10 11:20</div>
<div class="a t" style="left:1136.6px;top:456.6px;font-size:8.5px;color:#676a6c;letter-spacing:-0.4px">能源资源消费</div>
<div class="a lbl" style="left:912.2px;top:478.4px">已取消</div>
<svg class="a" style="left:987.1px;top:481.20000000000005px;overflow:visible" width="6.9" height="6.9" viewBox="0 8 8"><circle cx="4" cy="4" r="3.3" fill="none" stroke="#676a6c" stroke-width="1.25"/><path d="M4.1 4.1L2.6 2.6" fill="none" stroke="#676a6c" stroke-width="1.1"/></svg>
<div class="a t" style="left:997.1px;top:479.70000000000005px;font-size:9px;color:#676a6c;letter-spacing:-0.27px">2020-12-10 10:40</div>
<div class="a t" style="left:1136.6px;top:479.6px;font-size:8.5px;color:#676a6c;letter-spacing:-0.4px">能源资源消费</div>
<div class="a t" style="left:912.3px;top:502.6px;font-size:8.5px;color:#676a6c;letter-spacing:-0.3px">归档</div>
<svg class="a" style="left:987.1px;top:504.20000000000005px;overflow:visible" width="6.9" height="6.9" viewBox="0 8 8"><circle cx="4" cy="4" r="3.3" fill="none" stroke="#676a6c" stroke-width="1.25"/><path d="M4.1 4.1L2.6 2.6" fill="none" stroke="#676a6c" stroke-width="1.1"/></svg>
<div class="a t" style="left:997.1px;top:502.70000000000005px;font-size:9px;color:#676a6c;letter-spacing:-0.27px">2020-12-10 01:30</div>
<div class="a t" style="left:1136.6px;top:502.6px;font-size:8.5px;color:#676a6c;letter-spacing:-0.4px">能源资源消费</div>
<div class="a t" style="left:912.3px;top:525.6px;font-size:8.5px;color:#676a6c;letter-spacing:-0.3px">归档</div>
<svg class="a" style="left:987.1px;top:527.2px;overflow:visible" width="6.9" height="6.9" viewBox="0 8 8"><circle cx="4" cy="4" r="3.3" fill="none" stroke="#676a6c" stroke-width="1.25"/><path d="M4.1 4.1L2.6 2.6" fill="none" stroke="#676a6c" stroke-width="1.1"/></svg>
<div class="a t" style="left:997.1px;top:525.7px;font-size:9px;color:#676a6c;letter-spacing:-0.27px">2020-12-10 02:20</div>
<div class="a t" style="left:1136.6px;top:525.6px;font-size:8.5px;color:#676a6c;letter-spacing:-0.4px">能源资源消费</div>
</body></html>
